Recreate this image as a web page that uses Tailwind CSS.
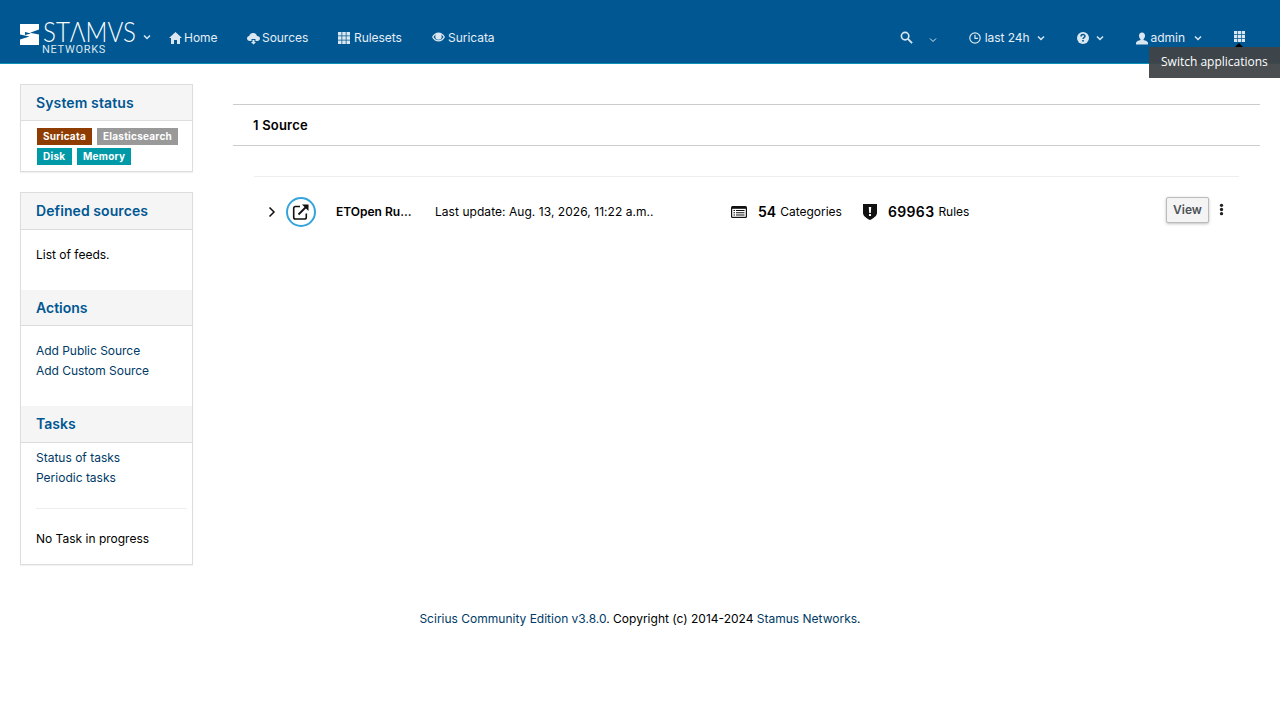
<!DOCTYPE html>
<html><head><meta charset="utf-8"><script src="https://cdn.jsdelivr.net/npm/@tailwindcss/browser@4"></script></head>
<body class="bg-white text-black font-['Inter','Liberation_Sans',sans-serif] text-[12px] leading-[20px] h-[720px] overflow-hidden">
<header class="relative h-16 bg-[#005792] border-b border-[#0a8fb5] flex items-center text-[#e6eef5]">
  <div class="flex items-start ml-5 w-[122px] h-[32px] mt-[15px] shrink-0">
    <svg width="19" height="21" viewBox="0 0 19 21" class="mt-[1px] shrink-0"><path fill="#fff" d="M0 0H19V5.500L10 8.800L19 10.500V21H0V15.500L9.500 12.500L0 10.500Z"/><path fill="#005792" d="M5 8L11 9.500L5 11Z"/></svg>
    <div class="ml-[4px] flex flex-col">
      <span class="font-['Lato'] font-light text-[28px] leading-[16px] text-white h-[21px] whitespace-nowrap origin-left scale-x-[0.86]">STΛMVS</span>
      <span class="font-['Roboto'] text-[11px] leading-[11px] tracking-[0.7px] text-[#dbe7f0] ml-[-1px]">NETWORKS</span>
    </div>
  </div>
  <svg width="10" height="6" viewBox="0 0 10 6" class="mt-[11px]"><path d="M2 1.500L5 4.500L8 1.500" fill="none" stroke="#dbe7f0" stroke-width="1.500"/></svg>
  <nav class="flex items-center ml-[17px] mt-[13px] text-[12px] tracking-[-0.04px]">
    <a class="flex items-center w-[78px]"><svg width="13" height="12" viewBox="0 0 13 12" class="mr-[2px]"><path fill="#dbe7f0" d="M6.500 0L13 6H11V12H8V8H5V12H2V6H0Z"/></svg>Home</a>
    <a class="flex items-center w-[91px]"><svg width="13" height="13" viewBox="0 0 13 13" class="mr-[2px]"><path fill="#dbe7f0" d="M3 9C1 9 0 7.700 0 6.300C0 5 1 4 2.200 4C2.700 2 4.300 1 6 1C8 1 9.600 2.300 10 4C11.800 4 13 5.200 13 6.500C13 8 11.800 9 10.500 9H8.500V7H4.500V9ZM5.500 8H7.500V10H9L6.500 12.500L4 10H5.500Z"/></svg>Sources</a>
    <a class="flex items-center w-[94px]"><svg width="12" height="12" viewBox="0 0 12 12" class="mr-[4px]"><path fill="#dbe7f0" d="M0 0H3.500V3.500H0ZM4.250 0H7.750V3.500H4.250ZM8.500 0H12V3.500H8.500ZM0 4.250H3.500V7.750H0ZM4.250 4.250H7.750V7.750H4.250ZM8.500 4.250H12V7.750H8.500ZM0 8.500H3.500V12H0ZM4.250 8.500H7.750V12H4.250ZM8.500 8.500H12V12H8.500Z"/></svg>Rulesets</a>
    <a class="flex items-center"><svg width="13" height="10" viewBox="0 0 13 10" class="mr-[3px] mt-[-2px]"><path fill="#dbe7f0" fill-rule="evenodd" d="M0 5C1.500 2 4 .5 6.500 .5S11.500 2 13 5C11.500 8 9 9.500 6.500 9.500S1.500 8 0 5ZM1.500 5C2.700 7 4.500 8.300 6.500 8.300S10.300 7 11.500 5C10.800 3.800 10 3 9 2.400C9.500 3 9.700 3.700 9.700 4.500A3.200 3.200 0 0 1 3.300 4.500C3.300 3.700 3.500 3 4 2.400C3 3 2.200 3.800 1.500 5Z"/></svg>Suricata</a>
  </nav>
  <div class="ml-auto flex items-center mr-[34px] mt-[13px] tracking-[-0.04px]">
    <svg width="13" height="13" viewBox="0 0 14 14" class="mt-[-2px]"><circle cx="5.500" cy="5.500" r="4" fill="none" stroke="#dbe7f0" stroke-width="1.800"/><path d="M8.500 8.500L13 13" stroke="#dbe7f0" stroke-width="2"/></svg>
    <svg width="10" height="6" viewBox="0 0 10 6" class="ml-[15px] mt-[3px]"><path d="M2 1.500L5 4.500L8 1.500" fill="none" stroke="#dbe7f0" stroke-width="1"/></svg>
    <svg width="12" height="12" viewBox="0 0 12 12" class="ml-[31px]"><circle cx="6" cy="6" r="5.200" fill="none" stroke="#dbe7f0" stroke-width="1.200"/><path d="M6 2.800V6.300H9" fill="none" stroke="#dbe7f0" stroke-width="1.200"/></svg>
    <span class="ml-[4px]">last 24h</span>
    <svg width="10" height="6" viewBox="0 0 10 6" class="ml-[6px]"><path d="M2 1.500L5 4.500L8 1.500" fill="none" stroke="#dbe7f0" stroke-width="1.500"/></svg>
    <svg width="12" height="12" viewBox="0 0 12 12" class="ml-[31px]"><circle cx="6" cy="6" r="6" fill="#dbe7f0"/><path d="M4 4.500C4 2 8 2 8 4.300C8 5.800 6 5.600 6 7" fill="none" stroke="#005792" stroke-width="1.500"/><rect x="5.200" y="8" width="1.600" height="1.600" fill="#005792"/></svg>
    <svg width="10" height="6" viewBox="0 0 10 6" class="ml-[6px]"><path d="M2 1.500L5 4.500L8 1.500" fill="none" stroke="#dbe7f0" stroke-width="1.500"/></svg>
    <svg width="12" height="13" viewBox="0 0 12 12" class="ml-[31px]"><path fill="#dbe7f0" d="M6 0C8 0 9 1.500 9 3.300C9 4.800 8.300 6 7.500 6.700V7.500C9.500 8.200 12 8.800 12 10.500V12H0V10.500C0 8.800 2.500 8.200 4.500 7.500V6.700C3.700 6 3 4.800 3 3.300C3 1.500 4 0 6 0Z"/></svg>
    <span class="ml-[3px]">admin</span>
    <svg width="10" height="6" viewBox="0 0 10 6" class="ml-[8px]"><path d="M2 1.500L5 4.500L8 1.500" fill="none" stroke="#dbe7f0" stroke-width="1.500"/></svg>
    <svg width="13" height="11" viewBox="0 0 12 12" class="ml-[30px] mt-[-3px]"><path fill="#dbe7f0" d="M0 0H3.500V3.500H0ZM4.250 0H7.750V3.500H4.250ZM8.500 0H12V3.500H8.500ZM0 4.250H3.500V7.750H0ZM4.250 4.250H7.750V7.750H4.250ZM8.500 4.250H12V7.750H8.500ZM0 8.500H3.500V12H0ZM4.250 8.500H7.750V12H4.250ZM8.500 8.500H12V12H8.500Z"/></svg>
  </div>
  <div class="absolute left-[1149px] top-[47px] w-[131px] h-[31px] bg-[#404548]/95 text-white font-['Open_Sans'] text-[12px] leading-[29px] pl-3 z-10">Switch applications
    <span class="absolute left-[86px] top-[-4px] w-0 h-0 border-x-[4px] border-x-transparent border-b-[4px] border-b-black"></span>
  </div>
</header>
<div class="flex">
  <aside class="w-[173px] ml-5 mt-5 shrink-0 flex flex-col gap-5">
    <section class="border border-[#ddd] shadow-[0_1px_1px_rgba(0,0,0,0.05)] h-[88px]">
      <h3 class="h-[36px] bg-[#f5f5f5] border-b border-[#ddd] pl-[15px] flex items-center text-[14px] font-semibold tracking-[0.12px] text-[#005792]">System status</h3>
      <div class="pl-4 pt-[7px] flex flex-wrap gap-x-[5px] gap-y-[3px] text-[10px] font-bold text-white leading-[17px] tracking-[0.25px]">
        <span class="bg-[#8f3c00] px-[6px] h-[17px]">Suricata</span>
        <span class="bg-[#999] px-[6px] h-[17px]">Elasticsearch</span>
        <span class="bg-[#0099a8] px-[6px] h-[17px] w-[35px]">Disk</span>
        <span class="bg-[#0099a8] px-[6px] h-[17px]">Memory</span>
      </div>
    </section>
    <section class="border border-[#ddd] shadow-[0_1px_1px_rgba(0,0,0,0.05)] h-[373px]">
      <h3 class="h-[37px] bg-[#f5f5f5] border-b border-[#ddd] pl-[15px] flex items-center text-[14px] font-semibold tracking-[0.08px] text-[#005792]">Defined sources</h3>
      <p class="pl-[15px] pt-[15px] h-[60px]">List of feeds.</p>
      <h3 class="h-[36px] bg-[#f5f5f5] border-b border-[#ddd] pl-[15px] flex items-center text-[14px] font-semibold text-[#005792]">Actions</h3>
      <div class="pl-[15px] pt-[15px] h-[80px] text-[#003a66] tracking-[-0.03px]"><a class="block">Add Public Source</a><a class="block">Add Custom Source</a></div>
      <h3 class="h-[37px] bg-[#f5f5f5] border-b border-[#ddd] pl-[15px] flex items-center text-[14px] font-semibold text-[#005792]">Tasks</h3>
      <div class="pl-[15px] pt-[5px] text-[#003a66]"><a class="block">Status of tasks</a><a class="block">Periodic tasks</a></div>
      <div class="ml-[15px] mr-[5px] mt-[20px] border-t border-[#eee] pt-[20px]">No Task in progress</div>
    </section>
  </aside>
  <main class="ml-10 mr-5 flex-1 mt-10">
    <div class="h-[42px] border-y border-[#ccc] pl-5 flex items-center font-semibold text-[13px] tracking-[0.2px]">1 Source</div>
    <div class="mt-[30px] mx-[21px] border-t border-[#eee] h-[70px] flex items-center relative">
      <svg width="10" height="12" viewBox="0 0 10 12" class="ml-[13px]"><path d="M2.500 1.500L7 6L2.500 10.500" fill="none" stroke="#111" stroke-width="1.500"/></svg>
      <span class="ml-[9px] w-[30px] h-[30px] rounded-full border-2 border-[#35a3dc] flex items-center justify-center">
        <svg width="18" height="18" viewBox="0 0 18 18"><path d="M8 3.500H3.500A1.800 1.800 0 0 0 1.700 5.300V14.200A1.800 1.800 0 0 0 3.500 16H12.500A1.800 1.800 0 0 0 14.300 14.200V10.500" fill="none" stroke="#111" stroke-width="1.600"/><path d="M6.500 11.500L15 3" stroke="#111" stroke-width="1.800"/><path d="M10 1.500H16.500V8Z" fill="#111"/></svg>
      </span>
      <b class="ml-[20px] w-[99px] font-semibold">ETOpen Ru...</b>
      <span class="w-[296px] tracking-[0.05px]">Last update: Aug. 13, 2026, 11:22 a.m..</span>
      <svg width="16" height="12" viewBox="0 0 16 12"><rect width="16" height="12" rx="1.500" fill="#111"/><path d="M1.200 2.800H14.800V10.800H1.200Z" fill="#fff"/><path d="M2.500 4.500H4M5 4.500H13.500M2.500 6.800H4M5 6.800H13.500M2.500 9H4M5 9H13.500" stroke="#111" stroke-width="1.100"/></svg>
      <b class="ml-[11px] text-[14px] font-semibold">54</b><span class="ml-[4px]">Categories</span>
      <svg width="14" height="16" viewBox="0 0 14 16" class="ml-[21px]"><path fill="#111" fill-rule="evenodd" d="M0 0H14V9C14 12 10 14.500 7 16C4 14.500 0 12 0 9ZM5.800 3L6.200 9H7.800L8.200 3ZM6 10V12H8V10Z"/></svg>
      <b class="ml-[11px] text-[14px] font-semibold tracking-[0.35px]">69963</b><span class="ml-[4px] tracking-[-0.05px]">Rules</span>
      <div class="absolute left-[912px] top-[20px] w-[43px] h-[26px] border border-[#bbb] bg-[#f4f4f4] rounded-[2px] shadow-[0_1px_3px_rgba(0,0,0,0.25)] flex items-center justify-center font-semibold text-[#4d5258]">View</div>
      <svg width="5" height="13" viewBox="0 0 6 14" class="absolute left-[965px] top-[26px]"><circle cx="3" cy="2" r="2" fill="#222"/><circle cx="3" cy="7" r="2" fill="#222"/><circle cx="3" cy="12" r="2" fill="#222"/></svg>
    </div>
  </main>
</div>
<footer class="absolute top-[609px] left-0 w-[1280px] text-center">
  <a class="text-[#003a66]">Scirius Community Edition v3.8.0</a>. Copyright (c) 2014-2024 <a class="text-[#003a66]">Stamus Networks</a>.
</footer>
</body></html>
